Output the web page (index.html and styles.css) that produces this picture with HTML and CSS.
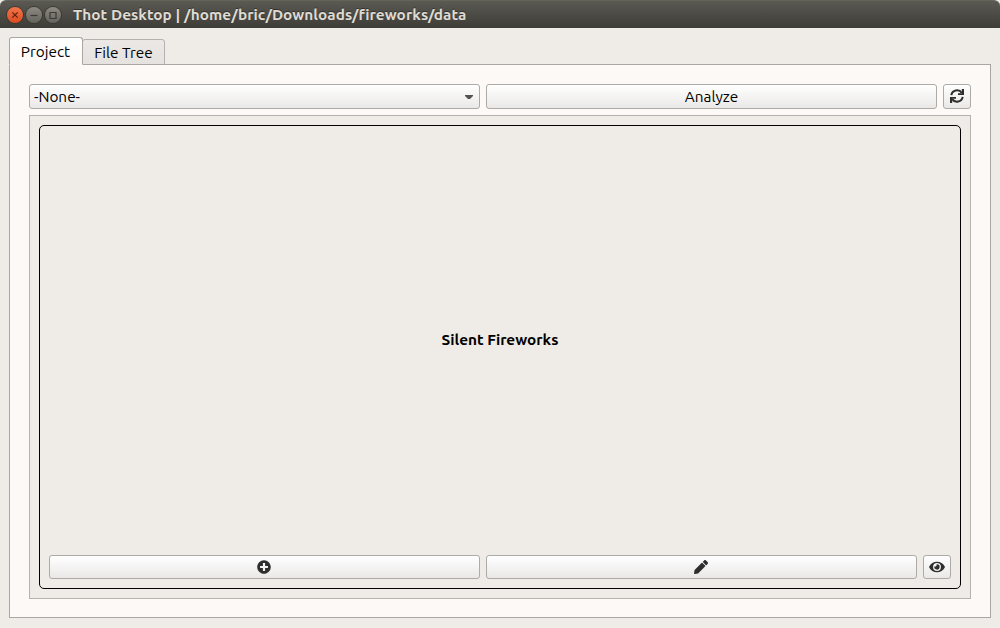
FILE: index.html
```html
<!DOCTYPE html>
<html lang="en">
<head>
<meta charset="utf-8">
<title>Thot Desktop</title>
<link rel="stylesheet" href="styles.css">
</head>
<body>
<header class="titlebar">
  <span class="win close"><svg viewBox="0 0 16 16"><path d="M5.300 5.300l5.400 5.400M10.700 5.300l-5.400 5.400"/></svg></span>
  <span class="win"><svg viewBox="0 0 16 16"><path d="M4.500 8.500h7"/></svg></span>
  <span class="win"><svg viewBox="0 0 16 16"><path d="M5 5.500h6v6H5z"/></svg></span>
  <span class="title">Thot Desktop | /home/bric/Downloads/fireworks/data</span>
</header>
<main class="window">
  <nav class="tabs">
    <div class="tab active"><span>Project</span></div>
    <div class="tab"><span>File Tree</span></div>
  </nav>
  <section class="pane">
    <div class="toolbar">
      <div class="btn combo"><span>-None-</span><svg class="arrow" viewBox="0 0 8 4"><path d="M0 0h8v1L5 4H3L0 1z"/></svg></div>
      <div class="btn"><span>Analyze</span></div>
      <div class="btn"><svg class="sync" viewBox="0 0 14 14"><path class="arc" d="M1.300 6.200A5.800 5.800 0 0 1 11.800 3.900M12.700 7.800A5.800 5.800 0 0 1 2.200 10.100"/><path d="M14 0v6H8V4.200h3.800V0zM0 14V8H6v1.800H2.200V14z"/></svg></div>
    </div>
    <div class="frame">
      <div class="card">
        <div class="name"><span>Silent Fireworks</span></div>
        <div class="actions">
          <div class="btn wide"><svg class="plus" viewBox="0 0 512 512"><path d="M256 8C119 8 8 119 8 256s111 248 248 248 248-111 248-248S393 8 256 8zm144 276c0 6.600-5.400 12-12 12h-92v92c0 6.600-5.400 12-12 12h-56c-6.600 0-12-5.400-12-12v-92h-92c-6.600 0-12-5.400-12-12v-56c0-6.600 5.400-12 12-12h92v-92c0-6.600 5.400-12 12-12h56c6.600 0 12 5.400 12 12v92h92c6.600 0 12 5.400 12 12v56z"/></svg></div>
          <div class="btn wide"><svg class="pencil" viewBox="0 0 512 512"><path d="M497.900 142.100l-46.100 46.100c-4.700 4.700-12.300 4.700-17 0l-111-111c-4.700-4.700-4.700-12.300 0-17l46.100-46.100c18.700-18.700 49.100-18.700 67.900 0l60.100 60.100c18.800 18.700 18.800 49.100 0 67.900zM284.200 99.800L21.600 362.400.4 483.900c-2.900 16.400 11.400 30.600 27.800 27.800l121.500-21.300 262.600-262.600c4.700-4.700 4.700-12.300 0-17l-111-111c-4.800-4.700-12.400-4.700-17.100 0z"/></svg></div>
          <div class="btn"><svg class="eye" viewBox="0 0 576 512"><path d="M572.520 241.400C518.290 135.590 410.930 64 288 64S57.680 135.640 3.480 241.410a32.350 32.350 0 0 0 0 29.190C57.710 376.410 165.070 448 288 448s230.320-71.640 284.520-177.410a32.350 32.350 0 0 0 0-29.190zM288 400a144 144 0 1 1 144-144 143.930 143.930 0 0 1-144 144zm0-240a95.310 95.310 0 0 0-25.310 3.790 47.850 47.850 0 0 1-66.900 66.900A95.780 95.780 0 1 0 288 160z"/></svg></div>
        </div>
      </div>
    </div>
  </section>
</main>
</body>
</html>
```
FILE: styles.css
```css
* { box-sizing: border-box; }
body {
  margin: 0;
  width: 1000px;
  height: 628px;
  display: flex;
  flex-direction: column;
  overflow: hidden;
  background: #efebe7;
  color: #000;
  font: 15.35px/20px Ubuntu, "Noto Sans", sans-serif;
}
svg { display: block; fill: #2e2e2e; }
span { white-space: nowrap; }

.titlebar {
  height: 28px;
  flex: none;
  display: flex;
  align-items: center;
  gap: 3px;
  padding: 0 7px;
  background: linear-gradient(#5b5952, #3d3c37);
  border-top: 1px solid #65635a;
  border-radius: 6px 6px 0 0;
}
.win {
  width: 16px;
  height: 16px;
  border-radius: 50%;
  background: linear-gradient(#8c8a82, #65635b);
  box-shadow: 0 0 0 1px #3a3934;
}
.win svg { width: 16px; height: 16px; fill: none; stroke: #3b3a36; stroke-width: 1.2; }
.close { background: linear-gradient(#f4744b, #dc4c1e); }
.close svg { stroke: #5b2311; }
.title {
  margin-left: 9px;
  color: #dfdbd2;
  font-weight: 700;
  letter-spacing: 0.05px;
  text-shadow: 0 -1px #33322e;
}

.window {
  flex: 1;
  display: flex;
  flex-direction: column;
  padding: 9px 9px 10px;
}
.tabs { display: flex; align-items: flex-end; height: 28px; margin-bottom: -1px; }
.tab {
  display: flex;
  justify-content: center;
  align-items: center;
  width: 83px;
  height: 26px;
  padding-top: 2px;
  margin-left: -1px;
  border: 1px solid #b5b1ae;
  border-radius: 3px 3px 0 0;
  background: linear-gradient(#ebe8e5, #e6e2df);
}
.tab.active {
  width: 74px;
  height: 28px;
  margin-left: 0;
  padding-right: 1px;
  border-color: #aaa6a3;
  border-bottom-color: #fdf9f6;
  background: linear-gradient(#fff, #fdf9f6);
  z-index: 1;
}
.pane {
  flex: 1;
  display: flex;
  flex-direction: column;
  gap: 6px;
  padding: 19px 19px 18px;
  border: 1px solid #aaa6a3;
  background: #fdf9f6;
}
.toolbar, .actions { display: grid; grid-template-columns: 1fr 1fr 28px; gap: 6px; }
.toolbar { height: 25px; }
.actions { height: 24px; }
.btn {
  display: flex;
  align-items: center;
  justify-content: center;
  border: 1px solid #aeaaa7;
  border-radius: 3px;
  background: linear-gradient(#fff, #eae8e7);
}
.btn.wide { padding-right: 1px; }
.combo { justify-content: space-between; padding: 0 6px 0 4px; }
.arrow { width: 8px; height: 4px; fill: #55524f; }
.frame {
  flex: 1;
  display: flex;
  padding: 9px;
  border: 1px solid #b5b1ad;
  background: #efebe6;
}
.card {
  flex: 1;
  display: flex;
  flex-direction: column;
  padding: 9px;
  border: 1px solid #000;
  border-radius: 5px;
}
.name {
  flex: 1;
  display: flex;
  align-items: center;
  justify-content: center;
  padding-bottom: 10px;
  font-weight: 700;
}
.sync { width: 14px; height: 14px; margin-bottom: 1px; }
.sync .arc { fill: none; stroke: #2e2e2e; stroke-width: 2; }
.plus, .pencil { width: 14px; height: 14px; }
.eye { width: 16px; height: 14px; }
```
